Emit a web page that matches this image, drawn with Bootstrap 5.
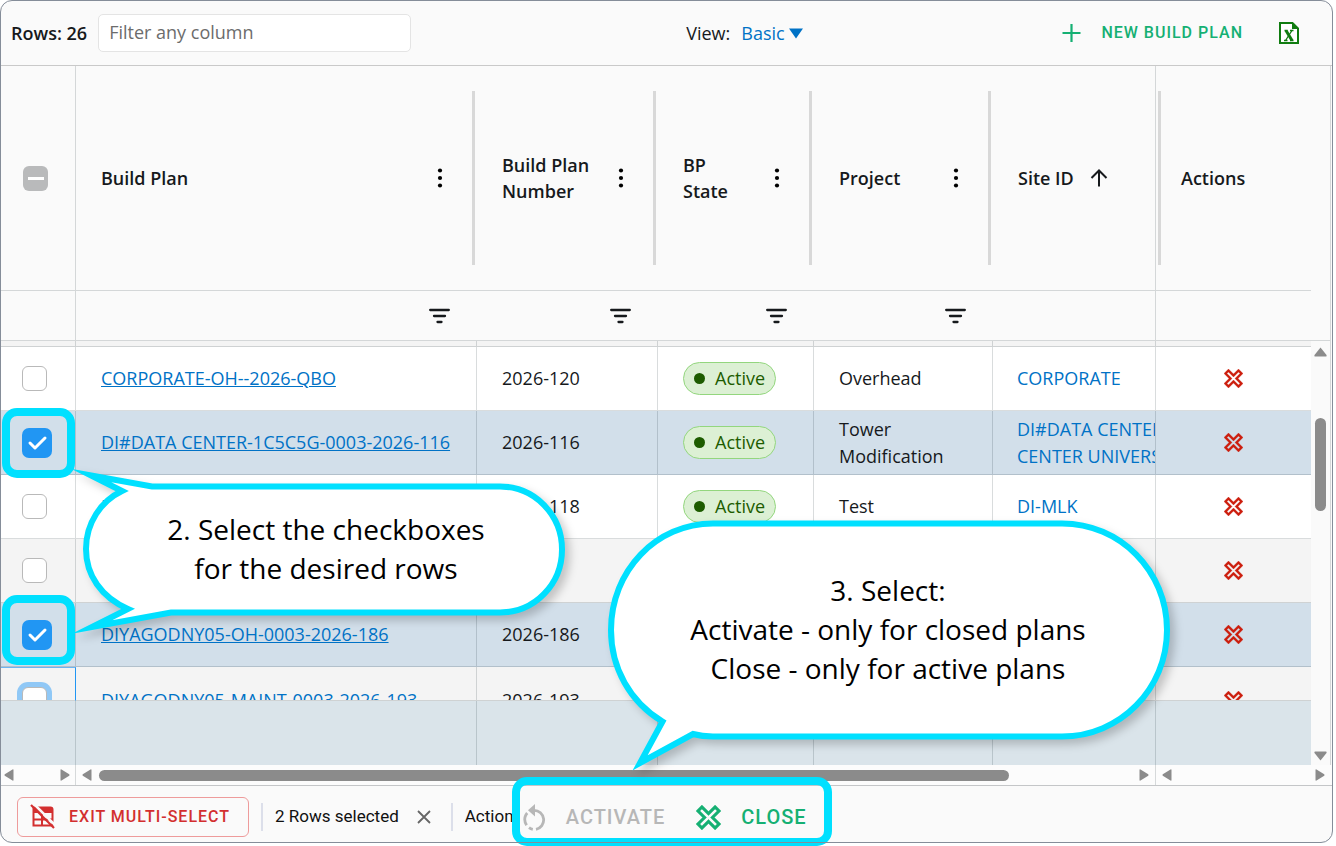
<!DOCTYPE html>
<html lang="en">
<head>
<meta charset="utf-8">
<meta name="viewport" content="width=device-width, initial-scale=1">
<title>Build Plans</title>
<link rel="stylesheet" href="https://cdn.jsdelivr.net/npm/bootstrap@5.3.0/dist/css/bootstrap.min.css">
<style>
  :root { --ink:#16191c; --link:#0072c6; --line:rgba(0,20,30,.15); --green:#15b073; --red:#d32f2f; --cyan:#00e0ff; }
  body { font-family:"Open Sans","Noto Sans",sans-serif; font-size:18px; line-height:26px; color:var(--ink); background:#fff; padding:0 3px 3px 0; }
  .app-frame { position:relative; background:#fafafa; padding:1px; border-radius:12px; }
  .app-frame::after { content:""; position:absolute; inset:0; border:1px solid #858d99; border-radius:12px; pointer-events:none; z-index:5; }
  a { color:var(--link); }
  svg { display:block; flex:none; }
  .flip { transform:rotate(180deg); }

  .toolbar { height:65px; border-bottom:1px solid #c9c9c9; padding:0 33px 0 10px; }
  .semi { font-weight:600; }
  .gap-s { gap:11px; } .gap-m { gap:16px; } .gap-l { gap:20px; }
  .filter-box { width:313px; height:38px; padding:0 10px 2px; border:1px solid #e4e4e4; border-radius:5px; color:var(--ink); }
  .filter-box::placeholder { color:#6c6c6c; }
  .view-select { appearance:none; border:0; background:none; color:var(--link); padding:0 14px 0 0; width:62px; }
  .view-arrow { position:absolute; right:0; top:8px; pointer-events:none; }
  .text-btn { border:0; background:none; padding:0; font-family:Roboto,sans-serif; font-weight:500; font-size:16px; letter-spacing:1px; }
  .icon-btn { border:0; background:none; padding:0; color:inherit; }
  .go { color:var(--green); } .idle { color:#b7b7b7; } .stop { color:#cc1d0c; }

  .plan-table { table-layout:fixed; width:100%; margin:0; color:var(--ink); border-collapse:separate; border-spacing:0; }
  .plan-table > :not(caption) > * > * { padding:0; border:0 solid var(--line); border-bottom-width:1px; background:transparent; box-shadow:none; color:inherit; vertical-align:middle; }
  .plan-table td:not(:last-child), .plan-table th:first-child, .plan-table th.edge { border-right-width:1px !important; }
  .plan-table .filters td:not(:first-child):not(.edge) { border-right-width:0 !important; }
  .w-check { width:75px; } .w-plan { width:401px; } .w-num { width:181px; } .w-state { width:156px; } .w-proj { width:179px; } .w-act { width:155px; }
  .heads th { height:225px; font-weight:600; position:relative; }
  .cell { padding:0 24px 0 25px; }
  .tool-dots { margin-right:10px; } .tool-sieve { margin-right:27px; }
  .heads .bar::after, .heads .bar-start::before { content:""; position:absolute; top:25px; bottom:25px; width:3px; background:#d8d8d8; right:2px; }
  .heads .bar-start::before { right:auto; left:2px; }
  .filters td { height:50px; }
  .sliver td { height:6px; background:#f4f4f4 !important; }
  .plan td { height:64px; line-height:27px; }
  .plan { background:#fff; } .plan.alt { background:#f4f4f4; } .plan.picked { background:#d2dfea; }
  .plan .clip { height:63px; overflow:hidden; white-space:nowrap; }
  .inner { height:100%; display:flex; align-items:center; }
  .plan.cut td { height:34px; } .plan.cut .clip { height:33px; }
  .plan.cut .inner { height:63px; }
  .plan.cut td:not(:first-child) .inner { height:66px; }
  .plan-table > tbody > .plan.cut > td:first-child { border-color:#6db5f2 #2196f3 var(--line) !important; border-top-width:1px; }
  .plan.cut td:first-child .clip { height:32px; }
  .pinned-row td { height:64px; background:#dae4ea !important; border-bottom-width:0 !important; }

  .pick { appearance:none; display:block; width:25px; height:25px; margin:0 0 0 21px; border:1px solid #b9b9b9; border-radius:6px; background:#fff no-repeat center; }
  .pick:checked { width:30px; height:30px; border:0; border-radius:7px; background-color:#2196f3; background-image:url("data:image/svg+xml,%3Csvg xmlns='http://www.w3.org/2000/svg' viewBox='0 0 30 30'%3E%3Cpath d='M8 15l5 5 10-10' fill='none' stroke='white' stroke-width='3' stroke-linecap='round' stroke-linejoin='round'/%3E%3C/svg%3E"); }
  .pick.partial { border:0; margin-left:22px; background-color:#b9babb; background-image:linear-gradient(#fff,#fff); background-size:16px 3px; }
  .cut .pick { box-shadow:0 0 0 5px #90c8f6; }
  .state { height:33px; border:1px solid #93d67e; background:#dcf0d4; color:#1d5c00; border-radius:17px; padding:0 10px 1px; gap:10px; }
  .dot { width:11px; height:11px; border-radius:50%; background:#1d5c00; }

  .vbar { width:20px; border-right:1px solid var(--line); color:#8b8b8b; margin-right:1px; flex:none; }
  .vhead { height:275px; border-bottom:1px solid var(--line); }
  .varrow { margin-top:6px; }
  .vthumb { width:11px; height:93px; margin-top:61px; border-radius:6px; background:#8b8b8b; }
  .hbars { height:21px; border-bottom:1px solid #c4c6c8; color:#8b8b8b; background:#fcfcfc; }
  .hbar { padding:0 6px; border-right:1px solid var(--line); }
  .hbar:last-child { border-right:0; }
  .hthumb { width:89%; height:11px; margin-left:7px; border-radius:6px; background:#8b8b8b; }
  .hbar-left { width:75px; padding:0 5px 0 3px; } .hbar-right { width:176px; padding-right:7px; }

  .footbar { height:56px; padding:6px 16px 0; font-family:Roboto,sans-serif; font-size:17px; color:#101010; }
  .exit-btn { height:40px; padding:0 18px 0 12px; gap:13px; border:1px solid #ee9b9b; border-radius:6px; color:var(--red); }
  .rule { width:2px; height:28px; background:#dcdfea; margin:0 12px; }
  .status { padding-bottom:2px; }
  .acts-label { width:52px; overflow:hidden; }
  .clear-btn { margin:0 8px 0 18px; }
  .big-btn { font-size:20px; }
  .acts { margin-left:6px; gap:31px; }

  .ring { position:absolute; border:8px solid var(--cyan); border-radius:15px; width:73px; height:70px; left:2px; pointer-events:none; }
  .ring-a { top:408px; } .ring-b { top:595px; } .ring-c { left:512px; top:777px; width:320px; height:69px; }
  .callout-art { position:absolute; left:0; top:0; pointer-events:none; filter:drop-shadow(5px 5px 4px rgba(0,0,0,.2)); }
  .callout-text { position:absolute; font-size:28px; line-height:39px; color:#000; text-align:center; white-space:nowrap; margin:0; }
  .say-a { left:86px; width:480px; top:510px; } .say-b { left:611px; width:554px; top:571px; }
</style>
</head>
<body>
<svg class="d-none" aria-hidden="true">
  <symbol id="kebab" viewBox="0 0 6 20"><circle cx="3" cy="2.5" r="2.1"/><circle cx="3" cy="10" r="2.1"/><circle cx="3" cy="17.5" r="2.1"/></symbol>
  <symbol id="sieve" viewBox="0 0 21 16"><path d="M1.200 2h18.600M5 8h11M8.500 14h4" fill="none" stroke="currentColor" stroke-width="2.300" stroke-linecap="round"/></symbol>
  <symbol id="cross" viewBox="3 3 18 18"><path fill="currentColor" stroke="currentColor" stroke-width=".3" d="M3,16.74L7.76,12L3,7.26L7.26,3L12,7.76L16.74,3L21,7.26L16.24,12L21,16.74L16.74,21L12,16.24L7.26,21L3,16.74M12,13.41L16.74,18.16L18.16,16.74L13.41,12L18.16,7.26L16.74,5.84L12,10.59L7.26,5.84L5.84,7.26L10.59,12L5.84,16.74L7.26,18.16L12,13.41Z"/></symbol>
  <symbol id="tri" viewBox="0 0 10 12"><path fill="currentColor" d="M9.500 1v10q0 1-1 .5L.8 6.700Q0 6 .8 5.300L8.500.5q1-.5 1 .5z"/></symbol>
</svg>

<main class="app-frame">
  <header class="toolbar d-flex align-items-center justify-content-between">
    <div class="d-flex align-items-center gap-s"><label class="semi" for="filter">Rows: 26</label><input id="filter" class="filter-box" type="text" placeholder="Filter any column"></div>
    <div class="d-flex align-items-center gap-s ps-3"><label for="view">View:</label>
      <span class="position-relative"><select id="view" class="view-select"><option>Basic</option></select><svg class="view-arrow" width="14" height="11" viewBox="0 0 14 11"><path d="M0 0.500h14L7 10.500z" fill="#0072c6"/></svg></span></div>
    <div class="d-flex align-items-center" style="gap:36px">
      <button type="button" class="text-btn go d-flex align-items-center gap-l"><svg width="19" height="18" viewBox="0 0 19 18"><path d="M9.500 0v18M.5 9h18" stroke="currentColor" stroke-width="2.200"/></svg>NEW BUILD PLAN</button>
      <button type="button" class="icon-btn" aria-label="Export"><svg width="20" height="22" viewBox="0 0 20 22"><path d="M1 1h12.500L19 6.500V21H1z" fill="#fff" stroke="#107c10" stroke-width="2"/><path d="M13 0v7h7z" fill="#107c10"/><path d="M5.500 8.500h3M11 8.500h3.500M5 18.500h3.500M11 18.500H14.500M13 8.500L6.500 18.500" stroke="#107c10" stroke-width="1.300"/><path d="M7 8.500l6 10" stroke="#107c10" stroke-width="3"/></svg></button>
    </div>
  </header>

  <section class="d-flex">
    <div class="flex-fill">
    <table class="table plan-table">
      <colgroup><col class="w-check"><col class="w-plan"><col class="w-num"><col class="w-state"><col class="w-proj"><col><col class="w-act"></colgroup>
      <thead>
        <tr class="heads">
          <th><input type="checkbox" class="pick partial" aria-label="Select all"></th>
          <th class="bar"><div class="cell d-flex justify-content-between align-items-center">Build Plan<button type="button" class="icon-btn tool-dots" aria-label="Menu"><svg width="6" height="20"><use href="#kebab"/></svg></button></div></th>
          <th class="bar"><div class="cell d-flex justify-content-between align-items-center"><span>Build Plan<br>Number</span><button type="button" class="icon-btn tool-dots" aria-label="Menu"><svg width="6" height="20"><use href="#kebab"/></svg></button></div></th>
          <th class="bar"><div class="cell d-flex justify-content-between align-items-center"><span>BP<br>State</span><button type="button" class="icon-btn tool-dots" aria-label="Menu"><svg width="6" height="20"><use href="#kebab"/></svg></button></div></th>
          <th class="bar"><div class="cell d-flex justify-content-between align-items-center">Project<button type="button" class="icon-btn tool-dots" aria-label="Menu"><svg width="6" height="20"><use href="#kebab"/></svg></button></div></th>
          <th class="edge"><div class="cell d-flex align-items-center gap-m">Site ID<svg width="18" height="18" viewBox="0 0 18 18"><path d="M9 17.500V1.500M1.500 9L9 1.500 16.500 9" fill="none" stroke="currentColor" stroke-width="2"/></svg></div></th>
          <th class="bar-start"><div class="cell">Actions</div></th>
        </tr>
        <tr class="filters">
          <td></td>
          <td><button type="button" class="icon-btn tool-sieve d-block ms-auto" aria-label="Filter"><svg width="21" height="16"><use href="#sieve"/></svg></button></td>
          <td><button type="button" class="icon-btn tool-sieve d-block ms-auto" aria-label="Filter"><svg width="21" height="16"><use href="#sieve"/></svg></button></td>
          <td><button type="button" class="icon-btn tool-sieve d-block ms-auto" aria-label="Filter"><svg width="21" height="16"><use href="#sieve"/></svg></button></td>
          <td><button type="button" class="icon-btn tool-sieve d-block ms-auto" aria-label="Filter"><svg width="21" height="16"><use href="#sieve"/></svg></button></td>
          <td class="edge"></td><td></td>
        </tr>
      </thead>
      <tbody id="rows"></tbody>
    </table>
    </div>
    <div class="vbar d-flex flex-column align-items-center">
      <div class="vhead align-self-stretch"></div>
      <svg class="varrow" width="13" height="10" viewBox="0 0 13 10"><path d="M6.500 0.500L12.500 8q.5 1.500-.5 1.500H1Q0 9.500.5 8z" fill="currentColor"/></svg>
      <div class="vthumb"></div>
      <svg class="mt-auto mb-1" width="13" height="10" viewBox="0 0 13 10"><path d="M6.500 9.500L12.500 2q.5-1.500-.5-1.500H1Q0 .5.500 2z" fill="currentColor"/></svg>
    </div>
  </section>
  <div class="hbars d-flex">
    <div class="hbar hbar-left d-flex align-items-center justify-content-between"><svg width="10" height="12"><use href="#tri"/></svg><svg class="flip" width="10" height="12"><use href="#tri"/></svg></div>
    <div class="hbar flex-fill d-flex align-items-center"><svg width="10" height="12"><use href="#tri"/></svg><div class="flex-fill me-4"><div class="hthumb"></div></div><svg class="flip" width="10" height="12"><use href="#tri"/></svg></div>
    <div class="hbar hbar-right d-flex align-items-center justify-content-between"><svg width="10" height="12"><use href="#tri"/></svg><svg class="flip" width="10" height="12"><use href="#tri"/></svg></div>
  </div>

  <footer class="footbar d-flex align-items-center">
    <button type="button" class="text-btn exit-btn d-flex align-items-center"><svg width="26" height="26" viewBox="0 0 26 26"><path d="M3.500 3.500H20.500Q22.500 3.500 22.500 5.500V21.500H3.500z" fill="none" stroke="currentColor" stroke-width="2"/><path d="M3 3h19v6H3z" fill="currentColor"/><path d="M3 15.500h19M12 9v12" stroke="currentColor" stroke-width="2"/><path d="M3.500-.5l23 23" stroke="#fafafa" stroke-width="2.500"/><path d="M1 1l23 23" stroke="currentColor" stroke-width="2.200"/></svg>EXIT MULTI-SELECT</button>
    <span class="rule"></span><span class="status">2 Rows selected</span>
    <button type="button" class="icon-btn clear-btn" aria-label="Clear"><svg width="14" height="14" viewBox="0 0 14 14"><path d="M1 1l12 12M13 1L1 13" stroke="#666" stroke-width="1.800"/></svg></button>
    <span class="rule"></span><span class="status acts-label">Actions</span>
    <div class="acts d-flex align-items-center">
      <button type="button" class="text-btn big-btn idle d-flex align-items-center gap-l"><svg width="23" height="27" viewBox="0 0 23 27"><g fill="none" stroke="currentColor" stroke-width="2.800"><path d="M11 6.300A9.600 9.600 0 0 1 13 25.300M9.800 25.400Q7.800 25 6 23.600M3.600 21.200Q.8 17 2.200 12.500 2.800 10.600 4.200 9"/></g><path d="M12 0v12.500L5 6.300z" fill="currentColor"/></svg>ACTIVATE</button>
      <button type="button" class="text-btn big-btn go d-flex align-items-center gap-l"><svg width="25" height="25"><use href="#cross"/></svg>CLOSE</button>
    </div>
  </footer>

  <div class="ring ring-a"></div><div class="ring ring-b"></div><div class="ring ring-c"></div>
  <svg class="callout-art" width="1333" height="843" viewBox="0 0 1333 843"><g fill="#fff" stroke="#00e0ff" stroke-width="6" stroke-miterlimit="20">
    <path d="M152 486.500H500C535 486.500 562 515 562 549.500S535 612.500 500 612.500H171L92 627 128 609C101 597 86 575 86 549S101 501 122 491L91 475.500z"/>
    <path d="M713 523.500H1062C1120 523.500 1167 571 1167 630S1120 736.500 1062 736.500H713Q702 736.500 693 734L640 763 662.500 721.500C630 702 611 668 611 630 611 571 656 523.500 713 523.500z"/></g></svg>
  <p class="callout-text say-a">2. Select the checkboxes<br>for the desired rows</p>
  <p class="callout-text say-b">3. Select:<br>Activate - only for closed plans<br>Close - only for active plans</p>
</main>

<script src="https://cdn.jsdelivr.net/npm/bootstrap@5.3.0/dist/js/bootstrap.bundle.min.js"></script>
<script>
  const plans = [
    { plan:'CORPORATE-OH--2026-QBO', num:'2026-120', state:'Active', project:'Overhead', site:'CORPORATE', kind:'' },
    { plan:'DI#DATA CENTER-1C5C5G-0003-2026-116', num:'2026-116', state:'Active', project:'Tower<br>Modification', site:'DI#DATA CENTER<br>CENTER UNIVERSITY', kind:'picked' },
    { plan:'DI-MLK', num:'2026-118', state:'Active', project:'Test', site:'DI-MLK', kind:'' },
    { plan:'', num:'', state:'', project:'', site:'', kind:'alt' },
    { plan:'DIYAGODNY05-OH-0003-2026-186', num:'2026-186', state:'', project:'', site:'', kind:'picked' },
    { plan:'DIYAGODNY05-MAINT-0003-2026-193', num:'2026-193', state:'', project:'', site:'', kind:'alt cut' }
  ];
  const cell = (html, pad = 'cell') => `<td><div class="clip"><div class="inner ${pad}">${html}</div></div></td>`;
  const blank = '<td></td>'.repeat(7);
  document.getElementById('rows').innerHTML =
    `<tr class="sliver">${blank}</tr>` +
    plans.map(p => `<tr class="plan ${p.kind}">` +
      cell(`<input type="checkbox" class="pick" aria-label="Select row" ${p.kind === 'picked' ? 'checked' : ''}>`, '') +
      cell(p.plan && `<a href="#">${p.plan}</a>`) +
      cell(p.num) +
      cell(p.state && `<span class="state d-flex align-items-center"><span class="dot"></span>${p.state}</span>`) +
      cell(`<div>${p.project}</div>`) +
      cell(p.site && `<a href="#" class="text-decoration-none">${p.site}</a>`, 'ps-4') +
      cell('<button type="button" class="icon-btn stop mx-auto" aria-label="Close plan"><svg width="19" height="19"><use href="#cross"/></svg></button>', '') +
      '</tr>').join('') +
    `<tr class="pinned-row">${blank}</tr>`;
</script>
</body>
</html>
